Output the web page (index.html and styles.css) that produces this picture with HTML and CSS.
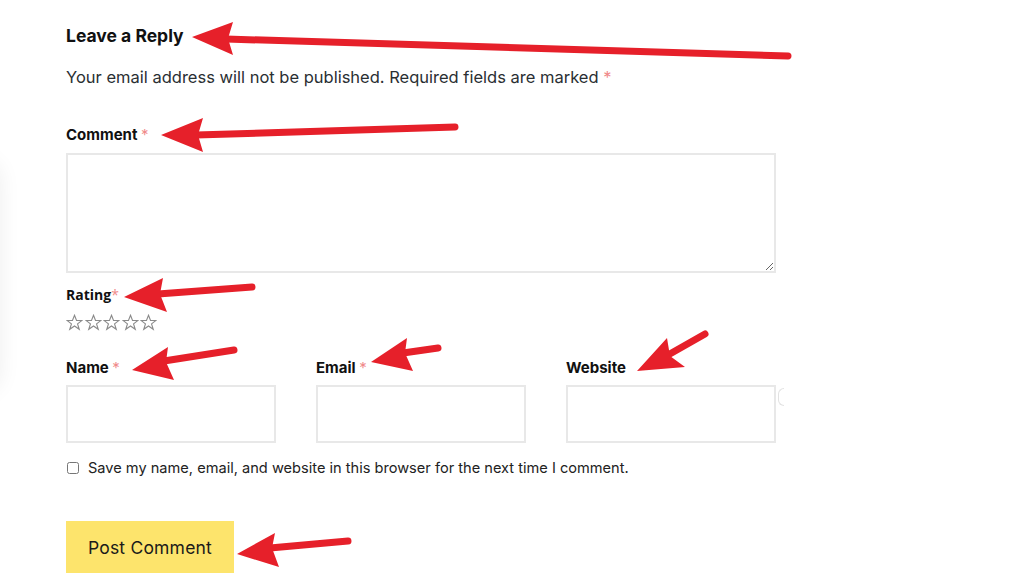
FILE: index.html
```html
<!DOCTYPE html>
<html lang="en">
<head>
    <meta charset="UTF-8">
    <meta name="viewport" content="width=device-width, initial-scale=1.0">
    <title>Leave a Reply</title>
    <link rel="stylesheet" href="styles.css">
</head>
<body>
    <div class="side-panel"></div>

    <div id="respond" class="comment-respond">
        <h3 class="reply-title">Leave a Reply</h3>
        <form id="commentform" class="comment-form">
            <p class="comment-notes">Your email address will not be published. Required fields are marked <span class="required">*</span></p>

            <div class="field field-comment">
                <label for="comment">Comment <span class="required">*</span></label>
                <textarea id="comment" name="comment" required></textarea>
            </div>

            <div class="field field-rating">
                <label class="rating-label">Rating<span class="required">*</span></label>
                <div class="stars">
                    <svg viewBox="0 0 20 20"><polygon points="10,1.5 12.4,7.6 18.8,7.6 13.6,11.6 15.6,18 10,14.1 4.4,18 6.4,11.6 1.2,7.6 7.6,7.6"/></svg>
                    <svg viewBox="0 0 20 20"><polygon points="10,1.5 12.4,7.6 18.8,7.6 13.6,11.6 15.6,18 10,14.1 4.4,18 6.4,11.6 1.2,7.6 7.6,7.6"/></svg>
                    <svg viewBox="0 0 20 20"><polygon points="10,1.5 12.4,7.6 18.8,7.6 13.6,11.6 15.6,18 10,14.1 4.4,18 6.4,11.6 1.2,7.6 7.6,7.6"/></svg>
                    <svg viewBox="0 0 20 20"><polygon points="10,1.5 12.4,7.6 18.8,7.6 13.6,11.6 15.6,18 10,14.1 4.4,18 6.4,11.6 1.2,7.6 7.6,7.6"/></svg>
                    <svg viewBox="0 0 20 20"><polygon points="10,1.5 12.4,7.6 18.8,7.6 13.6,11.6 15.6,18 10,14.1 4.4,18 6.4,11.6 1.2,7.6 7.6,7.6"/></svg>
                </div>
            </div>

            <div class="field-row">
                <div class="field">
                    <label for="author">Name <span class="required">*</span></label>
                    <input type="text" id="author" name="author" required>
                </div>
                <div class="field">
                    <label for="email">Email <span class="required">*</span></label>
                    <input type="email" id="email" name="email" required>
                </div>
                <div class="field field-url">
                    <label for="url">Website</label>
                    <input type="url" id="url" name="url">
                    <span class="url-edge"></span>
                </div>
            </div>

            <div class="cookies-consent">
                <input type="checkbox" id="cookies" name="cookies">
                <label for="cookies">Save my name, email, and website in this browser for the next time I comment.</label>
            </div>

            <button type="submit" class="submit">Post Comment</button>
        </form>
    </div>

    <!-- annotation arrows -->
    <svg class="arrows" viewBox="0 0 1015 578">
        <g class="shaft">
            <line x1="226" y1="39" x2="788" y2="56"/>
            <line x1="196" y1="135" x2="455" y2="127"/>
            <line x1="158" y1="294" x2="252" y2="287"/>
            <line x1="164" y1="361" x2="234" y2="350"/>
            <line x1="403" y1="353" x2="438" y2="348"/>
            <line x1="668" y1="355" x2="705" y2="334"/>
            <line x1="270" y1="548" x2="348" y2="541"/>
        </g>
        <g class="head">
            <polygon points="192,37 233,22 228,38.5 233,55"/>
            <polygon points="161,135 203,118 198,135 203,152"/>
            <polygon points="124,297 163,278 160,294 167,312"/>
            <polygon points="132,370 168,347 166,362 174,380"/>
            <polygon points="371,362 407,338 405,353 413,371"/>
            <polygon points="637,371 667,338 670,356 685,367"/>
            <polygon points="237,554 275,533 272,548 279,567"/>
        </g>
    </svg>
</body>
</html>
```

FILE: styles.css
```css
* {
    box-sizing: border-box;
}

body {
    margin: 0;
    background: #ffffff;
    color: #1b1b1b;
    font-family: 'Inter', 'Noto Sans', sans-serif;
    position: relative;
    min-height: 578px;
    overflow: hidden;
}

.side-panel {
    position: absolute;
    left: -40px;
    top: 160px;
    width: 40px;
    height: 232px;
    border-radius: 20px;
    box-shadow: 0 0 22px rgba(0, 0, 0, 0.07);
}

.comment-respond {
    padding: 24px 0 0 66px;
    width: 776px;
}

.reply-title {
    margin: 0;
    font-size: 17.5px;
    line-height: 24px;
    font-weight: 700;
    color: #111;
}

.comment-form {
    display: flex;
    flex-direction: column;
}

.comment-notes {
    margin: 17px 0 0;
    font-size: 16.5px;
    line-height: 24px;
    color: #2a2f33;
}

.required {
    color: #f08a8a;
}

.field {
    display: flex;
    flex-direction: column;
}

.field label {
    font-size: 15px;
    line-height: 20px;
    font-weight: 700;
    color: #111;
}

.field-comment {
    margin-top: 36px;
}

textarea,
.field input {
    margin-top: 8px;
    border: 2px solid #e8e8e8;
    background: #fff;
    border-radius: 0;
    font: inherit;
    outline: none;
}

textarea {
    width: 710px;
    height: 120px;
    resize: vertical;
}

.field-rating {
    margin-top: 12px;
}

.field-rating .rating-label {
    font-family: 'Open Sans', sans-serif;
    font-size: 14px;
}

.stars {
    margin-top: 7px;
    display: flex;
    gap: 1.5px;
    height: 20px;
    align-items: center;
}

.stars svg {
    width: 17px;
    height: 17px;
    fill: none;
    stroke: #8a8a8a;
    stroke-width: 1.3;
}

.field-row {
    margin-top: 26px;
    display: grid;
    grid-template-columns: repeat(3, 210px);
    column-gap: 40px;
}

.field .required {
    font-weight: 400;
}

.field input {
    height: 58px;
    width: 210px;
    margin-top: 7px;
}

.field-url {
    position: relative;
}

.url-edge {
    position: absolute;
    left: 212px;
    top: 30px;
    width: 6px;
    height: 18px;
    border: 1.5px solid #e2e2e2;
    border-right: none;
    border-radius: 9px 0 0 9px;
}

.cookies-consent {
    margin-top: 15px;
    display: flex;
    align-items: center;
    gap: 9px;
    height: 20px;
}

.cookies-consent input {
    margin: 0 0 0 1px;
    width: 12px;
    height: 12px;
}

.cookies-consent label {
    font-size: 14.6px;
    color: #222;
}

.submit {
    margin-top: 43px;
    align-self: flex-start;
    width: 168px;
    height: 52px;
    background: #fde46c;
    color: #1a1a1a;
    border: none;
    border-radius: 0;
    font-family: inherit;
    font-size: 17.5px;
    letter-spacing: 0.2px;
    cursor: pointer;
}

.arrows {
    position: absolute;
    top: 0;
    left: 0;
    width: 1015px;
    height: 578px;
    pointer-events: none;
}

.arrows .shaft line {
    stroke: #e6202a;
    stroke-width: 7;
    stroke-linecap: round;
}

.arrows .head polygon {
    fill: #e6202a;
}
```
